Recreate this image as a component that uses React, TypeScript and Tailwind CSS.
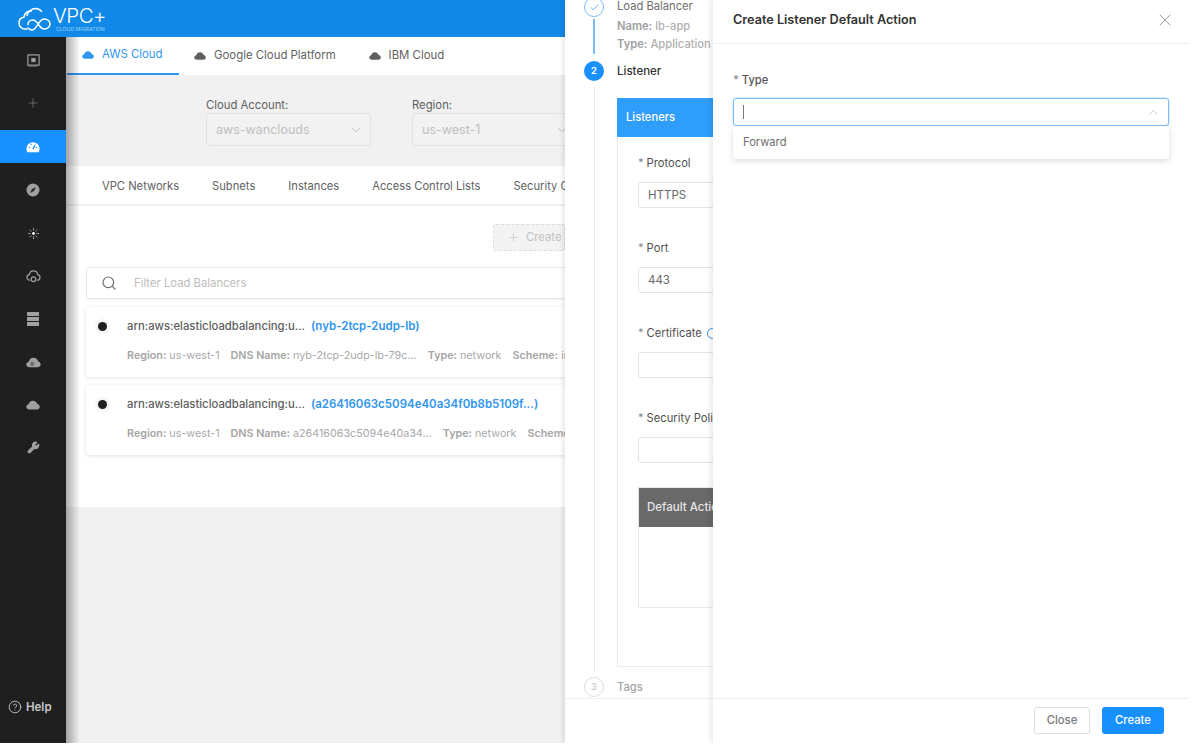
import type { ReactNode } from "react";
import { Check, ChevronDown, ChevronUp, Plus, Search, Wrench, X, HelpCircle } from "lucide-react";

const font = "font-['Inter','Liberation_Sans',sans-serif]";

function CloudIcon({ className }: { className: string }) {
  return (
    <svg viewBox="0 0 24 16" className={className} fill="currentColor">
      <path d="M6 15.500C2.800 15.500.5 13.600.5 11c0-2.300 1.700-4 4-4.400C5.300 3 8.300.5 12 .5c3.600 0 6.400 2.300 7.300 5.700 2.500.4 4.200 2.300 4.200 4.700 0 2.600-2.100 4.600-5 4.600H6z" />
    </svg>
  );
}

function Logo() {
  return (
    <svg viewBox="0 0 34 26" className="w-[34px] h-[26px]" fill="none" stroke="white" strokeWidth="1.500" strokeLinecap="round">
      <path d="M9 23H7C3.500 23 1 20.300 1 17c0-3 2-5.300 4.800-5.700C6.500 7 9.800 4.500 13.500 5" />
      <path d="M9 9.500c1-4 4.500-7 8.500-7 2.500 0 4.500 1 6 2.800" />
      <path d="M10 18.500c0-2.500 2-4.500 4.500-4.500 2.800 0 4.500 2.200 6 4.500s3.200 4.500 6 4.500c3 0 5.500-2.200 5.500-5s-2.500-5-5.500-5c-2.800 0-4.500 2.200-6 4.500S17 24 14 24c-1.800 0-3-1-4-2" />
    </svg>
  );
}

function Gauge() {
  return (
    <svg viewBox="0 0 16 14" className="w-[14px] h-[13px]">
      <path d="M1.500 13.500A7.500 7.500 0 1 1 14.500 13.500Z" fill="white" />
      <path d="M8 10 10.500 5" stroke="#1890ff" strokeWidth="1.300" />
      <circle cx="4" cy="8" r=".8" fill="#1890ff" />
      <circle cx="6" cy="4.500" r=".8" fill="#1890ff" />
      <circle cx="12" cy="8" r=".8" fill="#1890ff" />
    </svg>
  );
}

function Rail() {
  const g = "#a0a0a0";
  return (
    <aside className="w-[66px] bg-[#1f1f1f] flex flex-col shrink-0 items-center relative">
      <div className="h-[46px] flex items-center justify-center w-full">
        <svg viewBox="0 0 14 14" className="w-[13px] h-[13px]" fill="none" stroke={g}>
          <rect x="1" y="1" width="12" height="11" strokeWidth="1.300" />
          <rect x="5" y="4.500" width="4" height="4" fill={g} strokeWidth=".5" />
          <path d="M2 13.500h10" strokeWidth="1" strokeDasharray="1 1" />
        </svg>
      </div>
      <div className="h-[40px] flex items-center justify-center w-full">
        <Plus className="w-[14px] h-[14px] text-[#6f6f6f]" strokeWidth={1.500} />
      </div>
      <div className="h-[33px] mt-[7px] flex items-center justify-center w-full bg-[#1890ff]">
        <Gauge />
      </div>
      <div className="h-[53px] flex items-center justify-center w-full">
        <svg viewBox="0 0 14 14" className="w-[14px] h-[14px]">
          <circle cx="7" cy="7" r="6.500" fill={g} />
          <path d="M4 10 6 6l4-2-2 4z" fill="#2a2a2a" />
        </svg>
      </div>
      <div className="h-[34px] flex items-center justify-center w-full">
        <svg viewBox="0 0 14 14" className="w-[13px] h-[13px]" stroke={g} strokeWidth="1">
          <path d="M7 1v3M7 10v3M1 7h3M10 7h3M2.800 2.800l2 2M9.200 9.200l2 2M11.200 2.800l-2 2M4.800 9.200l-2 2" />
          <circle cx="7" cy="7" r="1.500" fill="white" stroke="none" />
        </svg>
      </div>
      <div className="h-[52px] flex items-center justify-center w-full">
        <svg viewBox="0 0 16 14" className="w-[15px] h-[13px]" fill="none" stroke={g} strokeWidth="1.300">
          <path d="M4.500 11H4C2 11 1 9.500 1 8c0-1.500 1-2.800 2.500-3C4 2.500 6 1 8 1s4 1.500 4.500 4C14 5.200 15 6.500 15 8c0 1.500-1 3-3 3h-.5" />
          <circle cx="8" cy="10" r="2.500" />
        </svg>
      </div>
      <div className="h-[34px] flex items-center justify-center w-full">
        <svg viewBox="0 0 12 14" className="w-[12px] h-[14px]" fill={g}>
          <rect x="0" y="0" width="12" height="4" />
          <rect x="0" y="5" width="12" height="4" />
          <rect x="0" y="10" width="12" height="4" />
        </svg>
      </div>
      <div className="h-[52px] flex items-center justify-center w-full">
        <svg viewBox="0 0 24 16" className="w-[15px] h-[11px]">
          <path d="M6 15.500C2.800 15.500.5 13.600.5 11c0-2.300 1.700-4 4-4.400C5.300 3 8.300.5 12 .5c3.600 0 6.400 2.300 7.300 5.700 2.500.4 4.200 2.300 4.200 4.700 0 2.600-2.100 4.600-5 4.600H6z" fill={g} />
          <circle cx="10" cy="10" r="3.500" fill="#6f6f6f" />
        </svg>
      </div>
      <div className="h-[34px] flex items-center justify-center w-full">
        <CloudIcon className="w-[14px] h-[10px] text-[#a0a0a0]" />
      </div>
      <div className="h-[51px] flex items-center justify-center w-full">
        <Wrench className="w-[13px] h-[13px] text-[#a0a0a0] fill-[#a0a0a0]" />
      </div>
      <div className="mt-auto mb-[27px] self-start ml-[8px] flex items-center gap-[4px] text-[#c9c9c9] text-[11.500px] font-semibold">
        <HelpCircle className="w-[14px] h-[14px]" strokeWidth={1.500} />
        <span>Help</span>
      </div>
    </aside>
  );
}

function Field({ label, value, children }: { label: string; value: string; children?: ReactNode }) {
  return (
    <div className="w-[165px] shrink-0">
      <div className="text-[11.300px] leading-[15px] text-[#5f5f5f]">{label}</div>
      <div className="h-[33px] border border-[#e2e2e2] rounded-[3px] bg-[#f2f2f2] flex items-center justify-between pl-[9px] pr-[7px] pt-px text-[12.500px] text-[#c0c0c0]">
        <span>{value}</span>
        {children}
      </div>
    </div>
  );
}

function Card({ id, items }: { id: string; items: [string, string][] }) {
  return (
    <div className="h-[70px] mb-[8px] rounded-[4px] bg-white shadow-[0_1px_4px_rgba(0,0,0,0.12)] flex overflow-hidden shrink-0">
      <div className="w-[41px] shrink-0 pt-[14px] pl-[12px]">
        <span className="block w-[9px] h-[9px] mt-px rounded-full bg-[#1f1f1f] ring-[3px] ring-[#f5f5f5]" />
      </div>
      <div className="min-w-0 flex-1">
        <div className="mt-[11px] text-[11.300px] leading-[16px] font-medium whitespace-nowrap text-[#5e5e5e]">
          arn:aws:elasticloadbalancing:u... <span className="ml-[3px] text-[11.500px] text-[#2f95ef] font-semibold">{id}</span>
        </div>
        <div className="mt-[15px] text-[10.750px] leading-[14px] text-[#a8a8a8] flex gap-[11px]">
          {items.map(([k, v]) => (
            <span key={k} className="whitespace-nowrap">
              <b className="font-semibold text-[#a5a5a5]">{k}</b> <span>{v}</span>
            </span>
          ))}
        </div>
      </div>
    </div>
  );
}

function Main() {
  const tabs = ["VPC Networks", "Subnets", "Instances", "Access Control Lists", "Security Groups"];
  return (
    <main className="w-[499px] shrink-0 overflow-hidden bg-[#f1f1f1] relative">
      <div className="h-[38px] bg-white flex text-[11.400px] pl-[1px]">
        <div className="w-[112px] h-[38px] border-b-2 border-[#2f95ef] text-[#2f95ef] flex items-center gap-[8px] pl-[15px]">
          <CloudIcon className="w-[12px] h-[8px]" />
          <span>AWS Cloud</span>
        </div>
        <div className="ml-[15px] flex items-center gap-[8px] text-[#5f5f5f]">
          <CloudIcon className="w-[12px] h-[8px]" />
          <span>Google Cloud Platform</span>
        </div>
        <div className="ml-[33px] flex items-center gap-[8px] text-[#5f5f5f]">
          <CloudIcon className="w-[12px] h-[8px]" />
          <span>IBM Cloud</span>
        </div>
      </div>
      <div className="h-[91px] flex pl-[140px] gap-[41px] pt-[23px]">
        <Field label="Cloud Account:" value="aws-wanclouds">
          <ChevronDown className="w-[14px] h-[14px] text-[#b5b5b5]" strokeWidth={1.500} />
        </Field>
        <Field label="Region:" value="us-west-1">
          <ChevronDown className="w-[14px] h-[14px] text-[#b5b5b5]" strokeWidth={1.500} />
        </Field>
      </div>
      <div className="h-[341px] bg-white overflow-hidden">
        <div className="h-[40px] pt-[3px] flex items-center pl-[36px] gap-[33px] text-[11.200px] text-[#5f5f5f] border-b-2 border-[#f0f0f0] whitespace-nowrap">
          {tabs.map((t) => (
            <span key={t}>{t}</span>
          ))}
        </div>
        <div className="h-[61px] flex justify-end items-start pt-[18px]">
          <div className="w-[72px] h-[27px] border border-dashed border-[#dddddd] bg-[#f3f3f3] rounded-[3px] flex items-center pl-[13px] gap-[6px] text-[11.300px] text-[#c2c2c2] whitespace-nowrap overflow-hidden">
            <Plus className="w-[13px] h-[13px] shrink-0" strokeWidth={1.300} />
            <span>Create Load Balancer</span>
          </div>
        </div>
        <div className="ml-[20px] w-[600px]">
          <div className="h-[32px] border border-[#e8e8e8] rounded-[3px] flex items-center pl-[14px] gap-[17px] mb-[8px] shadow-[0_1px_1px_rgba(0,0,0,0.04)]">
            <Search className="w-[16px] h-[16px] text-[#707070]" strokeWidth={1.800} />
            <span className="text-[11.300px] text-[#bdbdbd]">Filter Load Balancers</span>
          </div>
          <Card
            id="(nyb-2tcp-2udp-lb)"
            items={[
              ["Region:", "us-west-1"],
              ["DNS Name:", "nyb-2tcp-2udp-lb-79c..."],
              ["Type:", "network"],
              ["Scheme:", "internal"],
            ]}
          />
          <Card
            id="(a26416063c5094e40a34f0b8b5109f...)"
            items={[
              ["Region:", "us-west-1"],
              ["DNS Name:", "a26416063c5094e40a34..."],
              ["Type:", "network"],
              ["Scheme:", "internal"],
            ]}
          />
        </div>
      </div>
      <div className="absolute left-0 top-0 bottom-0 w-[14px] bg-gradient-to-r from-[rgba(0,0,0,0.32)] to-transparent" />
    </main>
  );
}

function FormItem({ label, value, extra }: { label: string; value?: string; extra?: boolean }) {
  return (
    <div className="h-[85px] pl-[20px]">
      <div className="text-[11.200px] leading-[16px] text-[#4f4f4f] flex items-center whitespace-nowrap">
        <span className="text-[#8a8a8a] mr-[3px]">*</span>
        {label}
        {extra && <span className="ml-[5px] w-[11px] h-[11px] shrink-0 rounded-full border border-[#2f95ef]" />}
      </div>
      <div className="mt-[11px] h-[26px] border border-[#e4e4e4] rounded-[3px] pl-[9px] text-[11.500px] leading-[24px] text-[#666]">
        {value}
      </div>
    </div>
  );
}

function StepDrawer() {
  return (
    <section className="absolute left-[565px] top-0 w-[148px] h-[743px] bg-white shadow-[-2px_0_5px_rgba(0,0,0,0.1)] overflow-hidden">
      <div className="h-full flex flex-col overflow-hidden">
        <div className="flex pl-[19px] -mt-[3px]">
          <div className="w-[20px] flex flex-col items-center shrink-0">
            <span className="w-[20px] h-[20px] rounded-full border border-[#7abcf7] flex items-center justify-center text-[#2f95ef] bg-white">
              <Check className="w-[11px] h-[11px]" strokeWidth={1.500} />
            </span>
            <span className="w-[1.500px] h-[35px] mt-[2px] bg-[#7abcf7]" />
          </div>
          <div className="ml-[13px] text-[11.200px] whitespace-nowrap">
            <div className="leading-[16px] mt-[1px] text-[#6d6d6d]">Load Balancer</div>
            <div className="leading-[18px] mt-[3px] text-[#b0b0b0] font-medium"><b className="font-semibold text-[#a0a0a0]">Name:</b> lb-app</div>
            <div className="leading-[18px] text-[#b0b0b0] font-medium"><b className="font-semibold text-[#a0a0a0]">Type:</b> Application</div>
          </div>
        </div>
        <div className="flex pl-[19px] mt-[7px]">
          <div className="w-[20px] flex flex-col items-center shrink-0">
            <span className="w-[20px] h-[20px] rounded-full bg-[#1890ff] text-white text-[9.500px] font-semibold flex items-center justify-center">2</span>
            <span className="w-px h-[586px] mt-[5px] bg-[#e8e8e8]" />
          </div>
          <div className="ml-[13px] w-[400px] shrink-0">
            <div className="text-[11.500px] leading-[20px] font-medium text-[#333]">Listener</div>
            <div className="mt-[17px] border border-[#ececec] h-[569px]">
              <div className="h-[39px] -mt-px -ml-px bg-[#2f9dfb] text-white text-[11.200px] font-medium flex items-center pl-[9px]">Listeners</div>
              <div className="pt-[18px]">
                <FormItem label="Protocol" value="HTTPS" />
                <FormItem label="Port" value="443" />
                <FormItem label="Certificate" extra />
                <FormItem label="Security Policy" />
                <div className="ml-[20px] h-[121px] -mt-[8px] border border-[#e8e8e8]">
                  <div className="h-[39px] bg-[#696969] text-[#e6e6e6] text-[11.500px] font-medium flex items-center pl-[8px] whitespace-nowrap">Default Action</div>
                </div>
              </div>
            </div>
          </div>
        </div>
        <div className="flex pl-[19px] mt-[5px] items-center">
          <span className="w-[20px] h-[20px] shrink-0 rounded-full border border-[#dcdcdc] text-[#c0c0c0] text-[9.500px] flex items-center justify-center bg-white">3</span>
          <span className="ml-[13px] text-[11.200px] font-medium text-[#a5a5a5]">Tags</span>
        </div>
        <div className="mt-[1px] border-t border-[#f0f0f0]" />
      </div>
    </section>
  );
}

function ActionDrawer() {
  return (
    <section className="absolute left-[713px] top-0 w-[476px] h-[743px] bg-white shadow-[-3px_0_5px_rgba(0,0,0,0.08)] flex flex-col">
      <header className="h-[44px] border-b border-[#eeeeee] flex items-center justify-between pl-[20px] pr-[14px] shrink-0">
        <span className="text-[12.650px] font-semibold text-[#333] -mt-[2px]">Create Listener Default Action</span>
        <X className="w-[20px] h-[20px] text-[#8a8a8a] -mt-[3px]" strokeWidth={1} />
      </header>
      <div className="flex-1 pl-[20px] pr-[20px] pt-[29px]">
        <div className="text-[11.200px] leading-[14px] text-[#555] font-medium"><span className="text-[#8a8a8a] mr-[3px]">*</span>Type</div>
        <div className="mt-[11px] h-[28px] border-[1.500px] border-[#7cbdf9] rounded-[3px] flex items-center justify-between pl-[9px] pr-[7px] shadow-[0_0_0_1px_rgba(24,144,255,0.14)]">
          <span className="w-px h-[14px] bg-[#777]" />
          <ChevronUp className="w-[15px] h-[15px] text-[#bdbdbd]" strokeWidth={1.200} />
        </div>
        <div className="h-[33px] pb-[1px] rounded-[3px] bg-white shadow-[0_2px_6px_rgba(0,0,0,0.14)] pl-[10px] flex items-center text-[11.200px] text-[#6f6f6f]">Forward</div>
      </div>
      <footer className="h-[45px] border-t border-[#eeeeee] flex justify-end items-start pt-[8px] pr-[25px] gap-[12px] shrink-0">
        <button className="w-[56px] h-[27px] rounded-[3px] border border-[#dedede] bg-white text-[11.300px] font-medium text-[#7a7a7a]">Close</button>
        <button className="w-[62px] h-[27px] rounded-[3px] bg-[#1890ff] text-[11.300px] font-medium text-white">Create</button>
      </footer>
    </section>
  );
}

export default function App() {
  return (
    <div className={`w-[1200px] h-[750px] bg-white overflow-hidden ${font}`}>
      <div className="relative w-[1189px] h-[743px] overflow-hidden flex flex-col">
        <div className="h-[37px] bg-[#1089e9] shrink-0 flex items-center pl-[18px]">
          <Logo />
          <div className="text-white ml-[1px] leading-none -mt-[1px]">
            <div className="text-[20.500px] leading-[21px] font-light tracking-[-0.5px]">VPC+</div>
            <div className="text-[5.200px] leading-[6px] ml-[3px] text-[#9fd0fa] whitespace-nowrap">CLOUD MIGRATION</div>
          </div>
        </div>
        <div className="flex-1 flex min-h-0">
          <Rail />
          <Main />
        </div>
        <StepDrawer />
        <ActionDrawer />
      </div>
    </div>
  );
}
